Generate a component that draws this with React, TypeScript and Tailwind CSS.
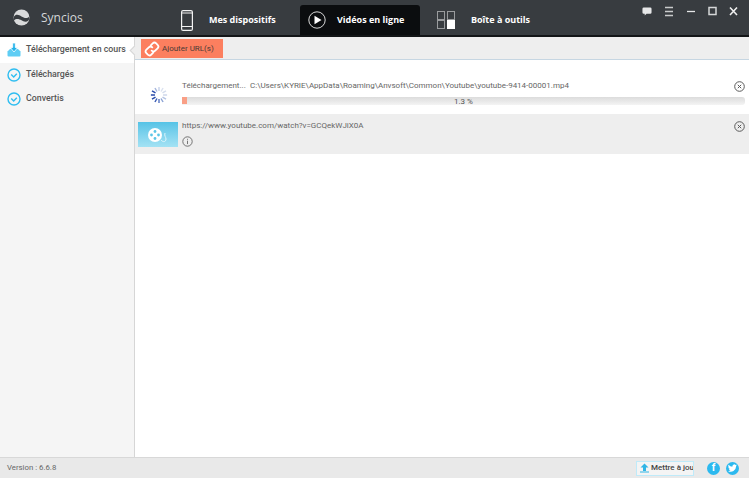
function Spinner() {
  const spokes = [0, 30, 60, 90, 120, 150, 180, 210, 240, 270, 300, 330];
  const colors = ["#c8d3ea", "#dbe2f0", "#d5dded", "#ccd6ea", "#b5c4e3", "#8ba2d4", "#5a78c2", "#3a5cb6", "#2448a8", "#1e40a6", "#2a4cab", "#a5b6dd"];
  return (
    <svg width="18" height="18" viewBox="0 0 20 20">
      {spokes.map((a, i) => (
        <line key={a} x1="10" y1="1" x2="10" y2="5.5" stroke={colors[i]} strokeWidth="1.6" transform={`rotate(${a} 10 10)`} />
      ))}
    </svg>
  );
}

function CloseCircle() {
  return (
    <svg width="11" height="11" viewBox="0 0 11 11" fill="none" stroke="#5a5a5a" strokeWidth="1">
      <circle cx="5.5" cy="5.5" r="4.8" />
      <path d="M3.8 3.8l3.4 3.4M7.2 3.8L3.8 7.2" />
    </svg>
  );
}

function CheckCircle() {
  return (
    <svg width="14" height="14" viewBox="0 0 14 14" fill="none" stroke="#2fbdf0" strokeWidth="1.4">
      <circle cx="7" cy="7" r="6" />
      <path d="M4.200 6.600L6.700 9l3.100-3.200" />
    </svg>
  );
}

function DownloadTray() {
  return (
    <svg width="14" height="14" viewBox="0 0 14 14">
      <path d="M0.500 8.500L3 6h8l2.500 2.500v4a1 1 0 0 1-1 1h-11a1 1 0 0 1-1-1z" fill="#5fcdf4" />
      <path d="M5.700 0h2.600v4.500h2.400L7 9 3.300 4.500h2.400z" fill="#22b2ea" stroke="#fff" strokeWidth="0.800" />
    </svg>
  );
}

function FilmThumb() {
  return (
    <div className="flex h-[25px] w-[40px] items-center justify-center bg-gradient-to-b from-[#55c3e6] to-[#a3e2f4]">
      <svg width="24" height="20" viewBox="0 0 24 20" fill="none">
        <circle cx="9" cy="10" r="7" fill="#fff" />
        <circle cx="9" cy="6.500" r="1.400" fill="#5cc5e6" />
        <circle cx="9" cy="13.500" r="1.400" fill="#5cc5e6" />
        <circle cx="5.500" cy="10" r="1.400" fill="#5cc5e6" />
        <circle cx="12.500" cy="10" r="1.400" fill="#5cc5e6" />
        <path d="M15 15c2 2.500 5 2 5-1 0-2-2-3-1-6" stroke="#e0f6fc" strokeWidth="1" />
      </svg>
    </div>
  );
}

export default function App() {
  return (
    <div className="flex h-[478px] w-[749px] flex-col overflow-hidden bg-white font-['Roboto',sans-serif] text-[#555]">
      {/* Title bar */}
      <header className="flex h-[37px] shrink-0 items-end border-b-2 border-[#131517] bg-[#383c40]">
        <div className="flex h-[35px] w-[181px] items-center pl-[13px]">
          <svg width="17" height="17" viewBox="0 0 17 17" className="mr-[11px]">
            <circle cx="8.500" cy="8.500" r="8" fill="#d9dadb" />
            <path d="M0.700 8C3 4.500 6 6 8.500 7.500S14 10 16.300 7.500c.3 2-.3 3-.8 4-2.500 2-5 1-7-.2S3 9 1 11.500C.6 10.500.6 9 .7 8z" fill="#383c40" />
          </svg>
          <span className="font-['Open_Sans',sans-serif] text-[12px] text-[#d5d7d8]">Syncios</span>
        </div>
        <div className="flex h-[30px] w-[119px] items-center">
          <svg width="12" height="21" viewBox="0 0 12 21" className="mr-[16px]" fill="none" stroke="#f2f2f2" strokeWidth="1.200">
            <rect x="0.600" y="0.600" width="10.800" height="19.800" rx="1.500" />
            <path d="M0.600 16.500h10.800M0.600 3h10.800" />
          </svg>
          <span className="font-['Open_Sans',sans-serif] text-[9px] font-bold text-white">Mes dispositifs</span>
        </div>
        <div className="flex h-[30px] w-[120px] items-center rounded-t-[3px] bg-[#0b0d0f]">
          <svg width="18" height="18" viewBox="0 0 18 18" className="ml-[8px] mr-[11px]">
            <circle cx="9" cy="9" r="8.200" fill="none" stroke="#d8d8d8" strokeWidth="1" />
            <path d="M6.500 4.800L13.500 9l-7 4.200z" fill="#fff" />
          </svg>
          <span className="font-['Open_Sans',sans-serif] text-[9px] font-bold text-white">Vidéos en ligne</span>
        </div>
        <div className="flex h-[30px] items-center pl-[17px]">
          <svg width="18" height="18" viewBox="0 0 18 18" className="mr-[16px]" fill="none" stroke="#9a9c9e" strokeWidth="1">
            <rect x="0.500" y="0.500" width="7" height="8" />
            <rect x="0.500" y="9.500" width="7" height="8" />
            <rect x="10.500" y="0.500" width="7" height="8" />
            <rect x="10.500" y="9.500" width="7" height="8" fill="#fff" stroke="#fff" />
          </svg>
          <span className="font-['Open_Sans',sans-serif] text-[9px] font-bold text-white">Boîte à outils</span>
        </div>
        <div className="ml-auto flex h-[35px] items-start gap-[12px] pr-[11px] pt-[6px]">
          <svg width="10" height="11" viewBox="0 0 11 11">
            <path d="M2 1h7a1.500 1.500 0 0 1 1.500 1.500v4A1.500 1.500 0 0 1 9 8H5L3 10V8H2A1.500 1.500 0 0 1 .5 6.500v-4A1.500 1.500 0 0 1 2 1z" fill="#e6e7e8" />
          </svg>
          <svg width="10" height="11" viewBox="0 0 10 11" stroke="#c9cbcc" strokeWidth="1.300">
            <path d="M1 1.500h8M1 5.500h8M1 9.500h8" />
          </svg>
          <svg width="10" height="11" viewBox="0 0 10 11" stroke="#e6e7e8" strokeWidth="1.300">
            <path d="M1 5.500h8" />
          </svg>
          <svg width="9" height="11" viewBox="0 0 9 11" fill="none" stroke="#d5d7d8" strokeWidth="1.500">
            <rect x="1" y="1.500" width="7" height="7" />
          </svg>
          <svg width="9" height="11" viewBox="0 0 9 11" stroke="#f0f0f0" strokeWidth="1.600">
            <path d="M1 1.500l7 7.500M8 1.500L1 9" />
          </svg>
        </div>
      </header>

      <div className="flex min-h-0 flex-1">
        {/* Sidebar */}
        <aside className="w-[135px] shrink-0 whitespace-nowrap border-r border-[#d6d6d6] bg-[#f5f5f5] text-[8.800px] font-medium text-[#555]">
          <div className="relative flex h-[26px] items-center gap-[5px] bg-white pl-[7px]">
            <DownloadTray />
            <span>Téléchargement en cours</span>
            <div className="absolute right-[-4px] top-[10px] h-[7px] w-[7px] rotate-45 border-b border-l border-[#d6d6d6] bg-[#eeeeee]" />
          </div>
          <div className="flex h-[24px] items-center gap-[5px] pl-[7px]">
            <CheckCircle />
            <span>Téléchargés</span>
          </div>
          <div className="flex h-[24px] items-center gap-[5px] pl-[7px]">
            <CheckCircle />
            <span>Convertis</span>
          </div>
        </aside>

        {/* Main panel */}
        <main className="flex min-w-0 flex-1 flex-col">
          <div className="flex h-[23px] shrink-0 items-start border-b border-[#c6d6e2] bg-[#eeeeee] pl-[6px] pt-[2px]">
            <button type="button" className="flex h-[19px] w-[82px] items-center bg-[#fc7f5f] pl-[3px] text-[8px] text-[#4a3a36]">
              <svg width="16" height="16" viewBox="0 0 16 16" fill="none" stroke="#fff" strokeWidth="1.800" strokeLinecap="round">
                <path d="M6.800 4.300l1.900-1.900a2.500 2.500 0 0 1 3.500 0l1.400 1.400a2.500 2.500 0 0 1 0 3.500l-2.400 2.400a2.500 2.500 0 0 1-3.500 0" />
                <path d="M9.200 11.700l-1.900 1.900a2.500 2.500 0 0 1-3.500 0L2.400 12.200a2.500 2.500 0 0 1 0-3.500l2.400-2.400a2.500 2.500 0 0 1 3.500 0" />
              </svg>
              <span className="ml-[2px]">Ajouter URL(s)</span>
            </button>
          </div>

          <div className="flex h-[54px] shrink-0 pl-[15px] pt-[16px]">
            <div className="mt-[10px] w-[32px] shrink-0">
              <Spinner />
            </div>
            <div className="min-w-0 flex-1 pr-[4px]">
              <div className="flex h-[20px] items-center justify-between text-[8px] text-[#666]">
                <div className="flex">
                  <span className="w-[68px]">Téléchargement...</span>
                  <span>C:\Users\KYRIE\AppData\Roaming\Anvsoft\Common\Youtube\youtube-9414-00001.mp4</span>
                </div>
                <CloseCircle />
              </div>
              <div className="relative mt-[1px] h-[8px] rounded-r-[3px] bg-gradient-to-b from-[#dcdcdc] to-[#f4f4f4]">
                <div className="h-[7px] w-[5px] bg-[#f99f86]" />
                <span className="absolute inset-0 text-center text-[8px] leading-[9px] text-[#555]">1.3 %</span>
              </div>
            </div>
          </div>

          <div className="flex h-[40px] shrink-0 bg-[#eeeeee] pl-[3px]">
            <div className="mt-[8px] w-[44px] shrink-0">
              <FilmThumb />
            </div>
            <div className="min-w-0 flex-1 pr-[4px] pt-[6px]">
              <div className="flex h-[12px] items-center justify-between text-[8px] text-[#666]">
                <span>https://www.youtube.com/watch?v=GCQekWJiX0A</span>
                <CloseCircle />
              </div>
              <svg width="11" height="11" viewBox="0 0 11 11" className="mt-[4px]" fill="none" stroke="#666" strokeWidth="0.900">
                <circle cx="5.500" cy="5.500" r="4.700" />
                <path d="M5.500 4.700v3.400M5.500 2.800v1" />
              </svg>
            </div>
          </div>
          <div className="flex-1 bg-white" />
        </main>
      </div>

      {/* Status bar */}
      <footer className="flex h-[21px] shrink-0 items-center border-t border-[#d8d8d8] bg-[#e9e9e9] pl-[7px] text-[7.800px] text-[#666]">
        <span>Version : 6.6.8</span>
        <div className="ml-auto flex h-[15px] w-[58px] items-center overflow-hidden whitespace-nowrap border border-[#bfeaf9] bg-[#f4f4f4] pl-[2px] text-[8px] font-medium text-[#444]">
          <svg width="11" height="10" viewBox="0 0 10 10" className="mr-[1px] shrink-0">
            <path d="M5 .5L9 4.500H6.500V8h-3V4.500H1zM.5 8.500h9v1h-9z" fill="#2fb5e6" />
          </svg>
          Mettre à jou
        </div>
        <div className="ml-[13px] flex h-[13px] w-[13px] items-center justify-center rounded-full bg-[#2cb9ef] text-[10px] font-bold leading-none text-white">f</div>
        <div className="ml-[6px] mr-[10px] flex h-[13px] w-[13px] items-center justify-center rounded-full bg-[#2cb9ef]">
          <svg width="9" height="8" viewBox="0 0 24 20" fill="#fff">
            <path d="M23.900 2.800c-.9.400-1.800.7-2.800.8 1-.6 1.800-1.600 2.200-2.700-1 .6-2 1-3.100 1.200A4.900 4.900 0 0 0 11.800 6.600 14 14 0 0 1 1.600 1.500a4.900 4.900 0 0 0 1.500 6.600c-.8 0-1.600-.2-2.200-.6 0 2.400 1.700 4.400 3.900 4.900-.7.200-1.500.2-2.200.1.600 2 2.400 3.400 4.600 3.400A9.900 9.900 0 0 1 0 17.900 14 14 0 0 0 21.500 5.500c1-.7 1.800-1.600 2.400-2.700z" />
          </svg>
        </div>
      </footer>
    </div>
  );
}
